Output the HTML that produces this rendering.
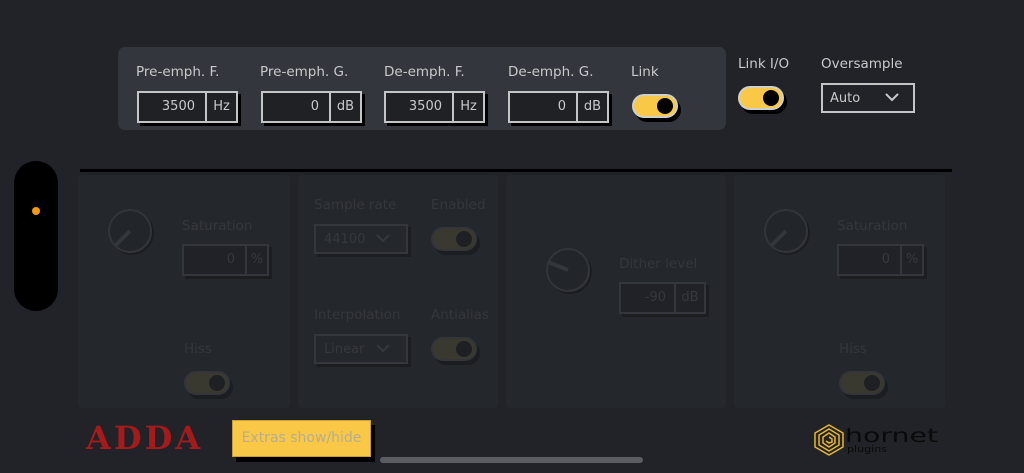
<!DOCTYPE html>
<html><head><style>
*{box-sizing:border-box;margin:0;padding:0}
body{width:1024px;height:473px;background:#212328;position:relative;overflow:hidden;font-family:"DejaVu Sans","Liberation Sans",sans-serif}
.a{position:absolute}
.lbl{position:absolute;color:#c8c9cb;font-size:13.5px}
.dl{position:absolute;color:#34373d;font-size:13.5px}
.inp{position:absolute;height:32px;border:2px solid #c4c5c7;background:#1f2125;box-shadow:3px 3px 0 #000;color:#c8c9cb;font-size:13px}
.inp .v{position:absolute;top:6px;text-align:right}
.inp .u{position:absolute;top:0;bottom:0;border-left:2px solid #c4c5c7;text-align:center;line-height:28px}
.dinp{position:absolute;height:32px;border:2px solid #33363c;background:#202227;box-shadow:3px 3px 0 #1b1d20;color:#35383e;font-size:13px}
.dinp .v{position:absolute;top:6px;text-align:right}
.dinp .u{position:absolute;top:0;bottom:0;border-left:2px solid #33363c;text-align:center;line-height:28px}
.tg{position:absolute;width:46px;height:24px;border-radius:12px;background:#f8c846;border:2px solid #d0d0c8;box-shadow:3px 4px 0 #000}
.tg::after{content:"";position:absolute;right:3px;top:2px;width:16px;height:16px;border-radius:50%;background:#000}
.dtg{position:absolute;width:46px;height:24px;border-radius:12px;background:#3a392f;border:2px solid #33353a;box-shadow:3px 4px 0 #1b1d20}
.dtg::after{content:"";position:absolute;right:3px;top:2px;width:16px;height:16px;border-radius:50%;background:#1e2024}
.pan{position:absolute;background:#24272c;top:175px;height:233px;border-radius:4px}
.sel{position:absolute;border:2px solid #33363c;color:#35383e;font-size:13px;height:30px;padding:6px 8px;box-shadow:3px 3px 0 #1b1d20}
.sel svg{position:absolute;right:16px;top:8px}
</style></head><body>
<div class="a" style="left:118px;top:47px;width:608px;height:83px;background:#33363c;border-radius:7px"></div>
<div class="lbl" style="left:136px;top:64px">Pre-emph. F.</div>
<div class="lbl" style="left:260px;top:64px">Pre-emph. G.</div>
<div class="lbl" style="left:384px;top:64px">De-emph. F.</div>
<div class="lbl" style="left:508px;top:64px">De-emph. G.</div>
<div class="lbl" style="left:631px;top:64px">Link</div>
<div class="inp" style="left:137px;top:91px;width:101px"><span class="v" style="right:41px">3500</span><span class="u" style="left:66px;width:31px">Hz</span></div>
<div class="inp" style="left:261px;top:91px;width:101px"><span class="v" style="right:41px">0</span><span class="u" style="left:66px;width:31px">dB</span></div>
<div class="inp" style="left:384px;top:91px;width:101px"><span class="v" style="right:41px">3500</span><span class="u" style="left:66px;width:31px">Hz</span></div>
<div class="inp" style="left:508px;top:91px;width:101px"><span class="v" style="right:41px">0</span><span class="u" style="left:66px;width:31px">dB</span></div>
<div class="tg" style="left:632px;top:94px"></div>
<div class="lbl" style="left:738px;top:56px">Link I/O</div>
<div class="tg" style="left:738px;top:86px"></div>
<div class="lbl" style="left:821px;top:56px">Oversample</div>
<div class="a" style="left:821px;top:83px;width:94px;height:30px;border:2px solid #c4c5c7;color:#c8c9cb;font-size:13px;padding:6px 7px">Auto<svg style="position:absolute;right:14px;top:8px" width="14" height="9"><path d="M1 1L7 7L13 1" stroke="#c8c9cb" stroke-width="2" fill="none"/></svg></div>
<div class="a" style="left:80px;top:169px;width:872px;height:3px;background:#000"></div>
<div class="a" style="left:14px;top:161px;width:44px;height:150px;background:#000;border-radius:22px"></div>
<div class="a" style="left:32px;top:207px;width:8px;height:8px;background:#f39c12;border-radius:50%"></div>
<div class="pan" style="left:78px;width:212px"></div>
<div class="pan" style="left:298px;width:200px"></div>
<div class="pan" style="left:506px;width:220px"></div>
<div class="pan" style="left:734px;width:211px"></div>
<svg class="a" style="left:106px;top:207px" width="52" height="52"><circle cx="26" cy="26" r="21" fill="none" stroke="#1b1d20" stroke-width="2"/><circle cx="24" cy="24" r="21" fill="#22252a" stroke="#32353a" stroke-width="2"/><path d="M24 24L9 39" stroke="#33363a" stroke-width="4"/></svg>
<div class="dl" style="left:182px;top:218px">Saturation</div>
<div class="dinp" style="left:182px;top:244px;width:87px"><span class="v" style="right:32px">0</span><span class="u" style="left:61px;width:22px">%</span></div>
<div class="dl" style="left:184px;top:341px">Hiss</div>
<div class="dtg" style="left:184px;top:371px"></div>
<div class="dl" style="left:314px;top:197px">Sample rate</div>
<div class="sel" style="left:314px;top:224px;width:94px">44100<svg width="14" height="9"><path d="M1 1L7 7L13 1" stroke="#35383e" stroke-width="2" fill="none"/></svg></div>
<div class="dl" style="left:431px;top:197px">Enabled</div>
<div class="dtg" style="left:431px;top:227px"></div>
<div class="dl" style="left:314px;top:307px">Interpolation</div>
<div class="sel" style="left:314px;top:334px;width:94px">Linear<svg width="14" height="9"><path d="M1 1L7 7L13 1" stroke="#35383e" stroke-width="2" fill="none"/></svg></div>
<div class="dl" style="left:431px;top:307px">Antialias</div>
<div class="dtg" style="left:431px;top:337px"></div>
<svg class="a" style="left:544px;top:246px" width="52" height="52"><circle cx="26" cy="26" r="21" fill="none" stroke="#1b1d20" stroke-width="2"/><circle cx="24" cy="24" r="21" fill="#22252a" stroke="#32353a" stroke-width="2"/><path d="M24 24L4 16" stroke="#33363a" stroke-width="4"/></svg>
<div class="dl" style="left:619px;top:256px">Dither level</div>
<div class="dinp" style="left:619px;top:282px;width:87px"><span class="v" style="right:38px">-90</span><span class="u" style="left:53px;width:30px">dB</span></div>
<svg class="a" style="left:762px;top:207px" width="52" height="52"><circle cx="26" cy="26" r="21" fill="none" stroke="#1b1d20" stroke-width="2"/><circle cx="24" cy="24" r="21" fill="#22252a" stroke="#32353a" stroke-width="2"/><path d="M24 24L9 39" stroke="#33363a" stroke-width="4"/></svg>
<div class="dl" style="left:837px;top:218px">Saturation</div>
<div class="dinp" style="left:837px;top:244px;width:87px"><span class="v" style="right:32px">0</span><span class="u" style="left:61px;width:22px">%</span></div>
<div class="dl" style="left:839px;top:341px">Hiss</div>
<div class="dtg" style="left:839px;top:371px"></div>
<div class="a" style="left:86px;top:419px;color:#a51a1a;font-family:'DejaVu Serif',serif;font-weight:bold;font-size:32px;letter-spacing:3px">ADDA</div>
<div class="a" style="left:232px;top:420px;width:139px;height:37px;background:#f8c846;border:1px solid #c9a030;box-shadow:4px 5px 0 #000;color:#b7ad92;font-size:14px;text-align:center;line-height:35px">Extras show/hide</div>
<div class="a" style="left:380px;top:457px;width:263px;height:6px;background:#5a5d62;border-radius:3px"></div>
<svg class="a" style="left:813px;top:424px" width="130" height="32" viewBox="0 0 130 32">
<g fill="none" stroke="#e8b828" stroke-width="1.5"><path d="M16 1L30 9L30 23L16 31L2 23L2 9Z"/><path d="M16 5L26 11L26 21L16 27L6 21L6 11Z"/><path d="M16 9L22 13L22 19L16 23L10 19L10 13Z"/><path d="M16 13L19 15L19 18L16 19L13 17"/></g>
<text x="32" y="18" font-family="DejaVu Sans" font-size="19" fill="#0a0a0a" textLength="93" lengthAdjust="spacingAndGlyphs">hornet</text>
<text x="34" y="28" font-family="DejaVu Sans" font-size="9" fill="#0a0a0a" textLength="40" lengthAdjust="spacingAndGlyphs">plugins</text>
</svg>
</body></html>
